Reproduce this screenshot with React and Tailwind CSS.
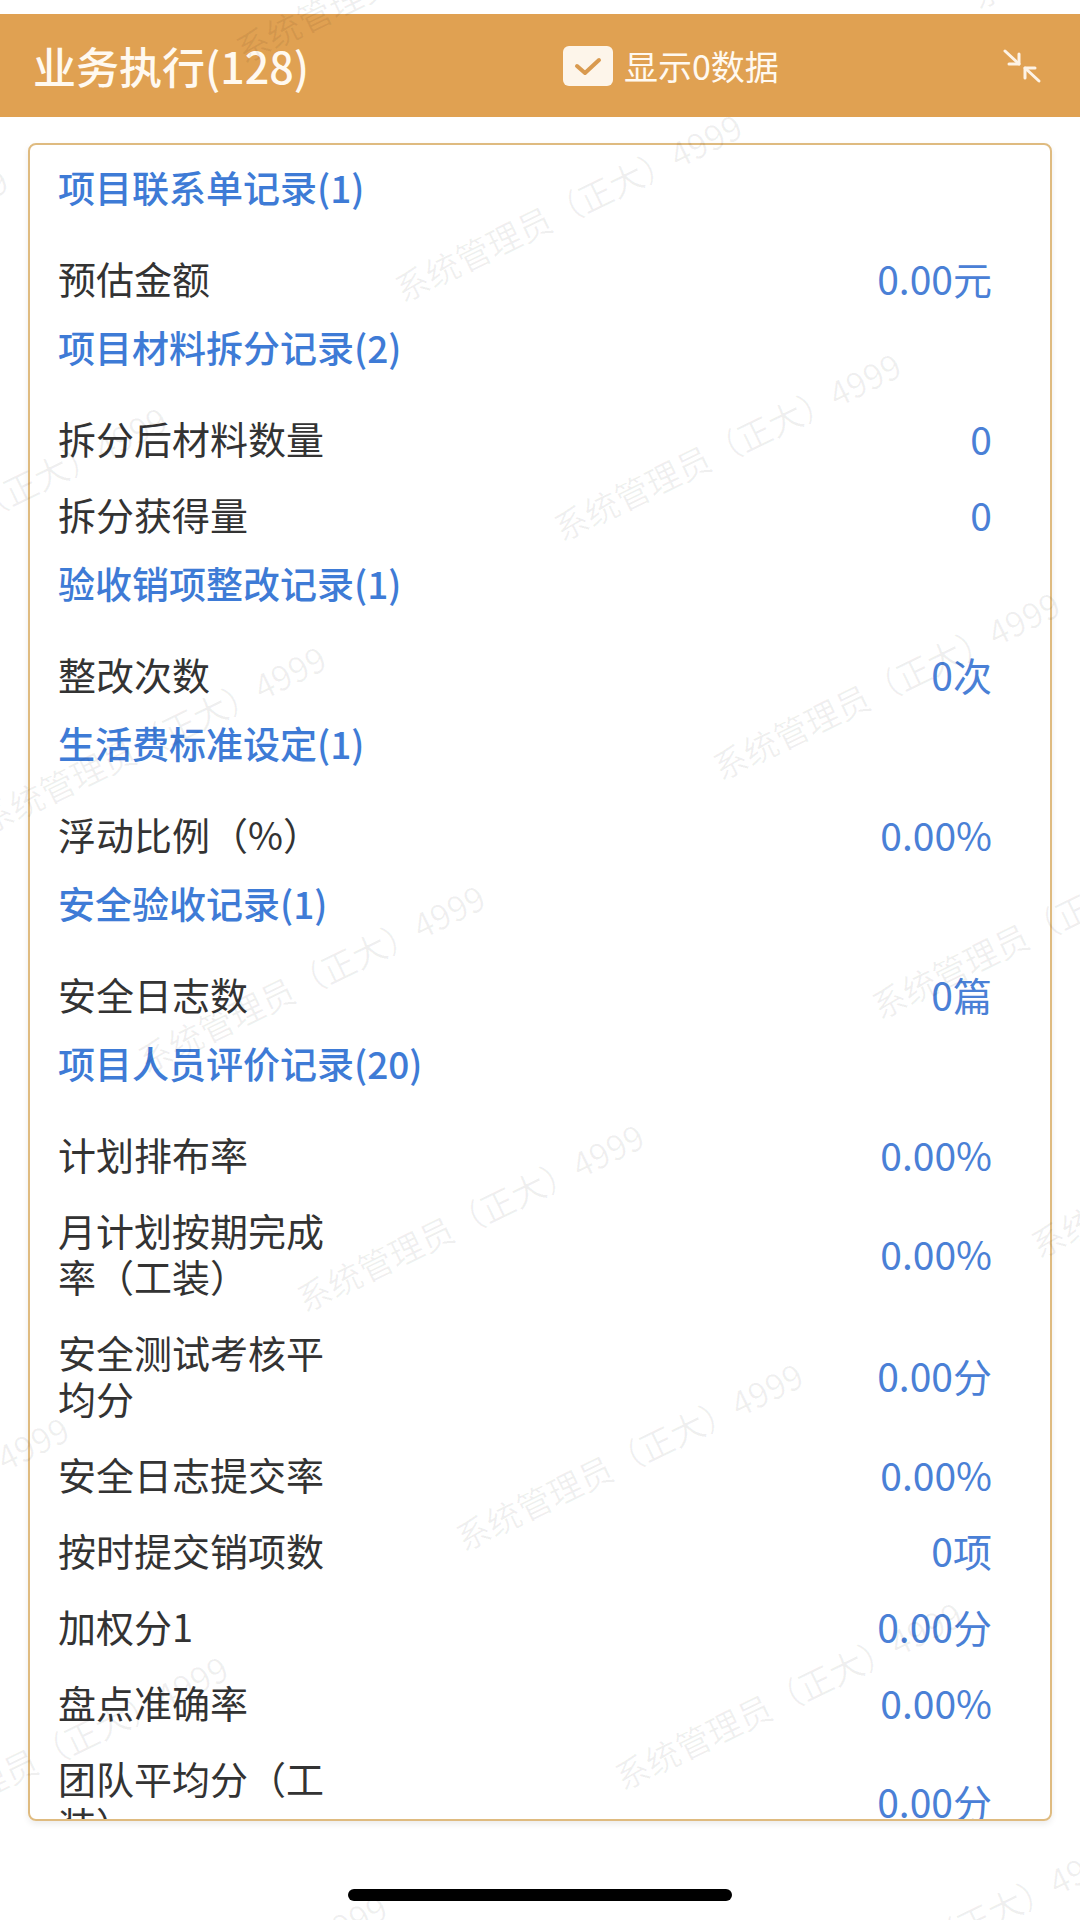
import React from "react";

const sections = [
  { title: "项目联系单记录(1)", rows: [["预估金额", "0.00元"]] },
  { title: "项目材料拆分记录(2)", rows: [["拆分后材料数量", "0"], ["拆分获得量", "0"]] },
  { title: "验收销项整改记录(1)", rows: [["整改次数", "0次"]] },
  { title: "生活费标准设定(1)", rows: [["浮动比例（%）", "0.00%"]] },
  { title: "安全验收记录(1)", rows: [["安全日志数", "0篇"]] },
  {
    title: "项目人员评价记录(20)",
    rows: [
      ["计划排布率", "0.00%"],
      ["月计划按期完成率（工装）", "0.00%"],
      ["安全测试考核平均分", "0.00分"],
      ["安全日志提交率", "0.00%"],
      ["按时提交销项数", "0项"],
      ["加权分1", "0.00分"],
      ["盘点准确率", "0.00%"],
      ["团队平均分（工装）", "0.00分"],
    ],
  },
];

// watermark lattice (full-size px)
const marks = [];
for (let r = -1; r <= 2; r++) {
  for (let k = -4; k <= 6; k++) {
    const x = 404 + r * -257 + k * 159;
    const y = 306 + r * 771 + k * 239;
    if (x > -420 && x < 1080 && y > -10 && y < 2100) marks.push({ x, y });
  }
}

function ShrinkIcon() {
  return (
    <svg width="40" height="36" viewBox="0 0 40 36" fill="none" stroke="#fdf3e6" strokeWidth="3" strokeLinecap="round" strokeLinejoin="round">
      <line x1="3" y1="3" x2="17" y2="16" />
      <polyline points="7,16 17,16 17,6" />
      <line x1="23" y1="20" x2="37" y2="33" />
      <polyline points="33,20 23,20 23,30" />
    </svg>
  );
}

function Row({ label, value }) {
  return (
    <div className="flex items-center py-[15px]">
      <div className="w-[290px] shrink-0 text-[38px] leading-[46px] text-[#333333]">{label}</div>
      <div className="flex-1 text-right text-[39px] leading-[46px] text-[#4a80d6]">{value}</div>
    </div>
  );
}

export default function App() {
  return (
    <div className="relative h-[1920px] w-[1080px] overflow-hidden bg-white flex flex-col pt-[14px] font-['Noto_Sans_CJK_SC',sans-serif]">
      {/* Header */}
      <header className="h-[103px] shrink-0 bg-[#e0a152] grid grid-cols-[530px_1fr_auto] items-center pl-[33px] pr-[38px]">
        <h1 className="text-[43px] font-medium text-[#fff9f0] leading-none">业务执行(128)</h1>
        <div className="flex items-center gap-[11px]">
          <div className="w-[50px] h-[40px] rounded-[6px] bg-[#fdf5ea] flex items-center justify-center">
            <svg width="30" height="22" viewBox="0 0 30 22" fill="none" stroke="#d99a4f" strokeWidth="4" strokeLinecap="round" strokeLinejoin="round">
              <polyline points="4,11 12,18 26,5" />
            </svg>
          </div>
          <span className="text-[34px] text-[#fff9f0] leading-none">显示0数据</span>
        </div>
        <ShrinkIcon />
      </header>

      {/* Card */}
      <main className="flex-1 mt-[26px] mx-[28px] border-2 border-[#dfbb80] rounded-[8px] shadow-[0_3px_6px_rgba(0,0,0,0.08)] overflow-hidden pt-[11px] pl-[28px] pr-[58px]">
        {sections.map((s) => (
          <div key={s.title}>
            <div className="pt-[8px] pb-[30px] text-[37px] leading-[46px] font-medium text-[#3e7bd6]">{s.title}</div>
            {s.rows.map(([l, v]) => (
              <Row key={l} label={l} value={v} />
            ))}
          </div>
        ))}
      </main>

      {/* Home indicator */}
      <div className="h-[99px] shrink-0 flex justify-center pt-[68px]">
        <div className="w-[384px] h-[12px] rounded-full bg-black" />
      </div>

      {/* Watermark */}
      <div className="pointer-events-none absolute inset-0">
        {marks.map((m, i) => (
          <span
            key={i}
            className="absolute whitespace-nowrap text-[34px] leading-none text-black/[0.06] origin-bottom-left -rotate-[26deg]"
            style={{ left: m.x, top: m.y - 34 }}
          >
            系统管理员（正大）4999
          </span>
        ))}
      </div>
    </div>
  );
}
